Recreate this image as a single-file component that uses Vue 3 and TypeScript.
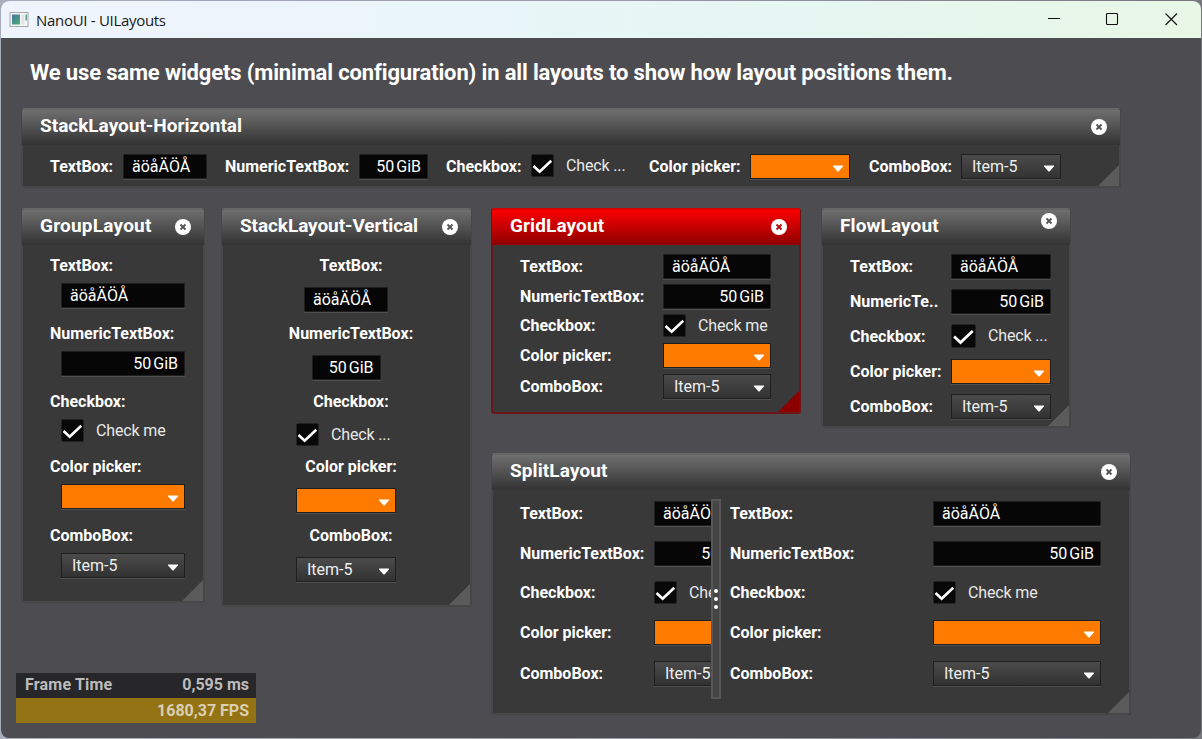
<script setup lang="ts">
type Kind = 'text' | 'number' | 'check' | 'color' | 'combo'

interface Field {
  kind: Kind
  label: string
  value: string
}

interface Win {
  id: string
  title: string
  panes: Field[][]
}

function fields(checkText = 'Check me', numericLabel = 'NumericTextBox:'): Field[] {
  return [
    { kind: 'text', label: 'TextBox:', value: 'äöåÄÖÅ' },
    { kind: 'number', label: numericLabel, value: '50 GiB' },
    { kind: 'check', label: 'Checkbox:', value: checkText },
    { kind: 'color', label: 'Color picker:', value: '' },
    { kind: 'combo', label: 'ComboBox:', value: 'Item-5' },
  ]
}

const windows: Win[] = [
  { id: 'horizontal', title: 'StackLayout-Horizontal', panes: [fields('Check ...')] },
  { id: 'group', title: 'GroupLayout', panes: [fields()] },
  { id: 'vertical', title: 'StackLayout-Vertical', panes: [fields('Check ...')] },
  { id: 'grid', title: 'GridLayout', panes: [fields()] },
  { id: 'flow', title: 'FlowLayout', panes: [fields('Check ...', 'NumericTe..')] },
  { id: 'split', title: 'SplitLayout', panes: [fields(), fields()] },
]
</script>

<template>
  <div class="desktop">
    <div class="app">
      <header class="titlebar">
        <svg class="app-icon" width="20" height="16" viewBox="0 0 20 16">
          <defs>
            <linearGradient id="appIcon" x1="0" y1="0" x2="1" y2="1">
              <stop offset="0" stop-color="#4474a8" />
              <stop offset="1" stop-color="#4fae6c" />
            </linearGradient>
          </defs>
          <rect x="1" y=".5" width="18" height="14" fill="#f3f5f6" stroke="#a5a9ac" />
          <rect x="3" y="2.500" width="8" height="10" fill="url(#appIcon)" />
          <rect x="12.500" y="3" width="3" height="9.500" fill="#e2e4e5" />
          <rect x="16.500" y="2.500" width="1.500" height="6" fill="#5f9f95" />
        </svg>
        <span class="app-name">NanoUI - UILayouts</span>
        <svg class="sys" width="130" height="14" viewBox="0 0 130 14" fill="none" stroke="#111" stroke-width="1.100">
          <path d="M0 5.500H12" />
          <rect x="58.500" y=".5" width="11" height="11" rx="1" />
          <path d="M117.500 .5L129 12M129 .5L117.500 12" />
        </svg>
      </header>

      <main class="canvas">
        <h1 class="headline">We use same widgets (minimal configuration) in all layouts to show how layout positions them.</h1>

        <section v-for="w in windows" :key="w.id" class="win" :class="w.id">
          <div class="win-head">
            <span class="win-title">{{ w.title }}</span>
            <svg class="close" width="16" height="16" viewBox="0 0 16 16">
              <circle cx="8" cy="8" r="8" fill="#fff" />
              <path class="cross" d="M5.500 5.500L10.500 10.500M10.500 5.500L5.500 10.500" stroke-width="1.900" />
            </svg>
          </div>
          <div class="win-body">
            <template v-for="(pane, p) in w.panes" :key="p">
              <div v-if="p > 0" class="splitter"><i /><i /><i /></div>
              <div class="pane">
                <template v-for="f in pane" :key="f.kind">
                  <span class="label" :class="'for-' + f.kind">{{ f.label }}</span>
                  <div v-if="f.kind === 'check'" class="check">
                    <span class="tick">
                      <svg viewBox="0 0 22 22" fill="none" stroke="#fff" stroke-width="2.700">
                        <path d="M1.600 11.500L8 17.600L20.200 6" />
                      </svg>
                    </span>
                    <span class="check-text">{{ f.value }}</span>
                  </div>
                  <div v-else class="box" :class="f.kind">
                    <span class="value">{{ f.value }}</span>
                    <svg v-if="f.kind === 'color' || f.kind === 'combo'" class="arrow" width="12" height="7" viewBox="0 0 12 7">
                      <path d="M1.300 .5H10.700Q11.500 .700 10.900 1.500L6.700 6.200Q6 6.800 5.300 6.200L1.100 1.500Q.5 .700 1.300 .5Z" fill="#fff" />
                    </svg>
                  </div>
                </template>
              </div>
            </template>
          </div>
          <span class="grip" />
        </section>

        <aside class="perf">
          <div class="perf-row"><span>Frame Time</span><span>0,595 ms</span></div>
          <div class="perf-row fps"><span>1680,37 FPS</span></div>
        </aside>
      </main>
    </div>
  </div>
</template>

<style>
html,
body {
  margin: 0;
  overflow: hidden;
}
</style>

<style scoped>
.desktop {
  box-sizing: border-box;
  width: 1202px;
  height: 739px;
  padding: 1px;
  background: linear-gradient(to right, #a9aebf, #9a9aac 50%, #77777e);
  font-family: Roboto, "Liberation Sans", sans-serif;
  color: #fff;
}
.app {
  height: 737px;
  border-radius: 8px;
  overflow: hidden;
  background: #4d4c50;
  display: flex;
  flex-direction: column;
}
.titlebar {
  height: 37px;
  flex: none;
  display: flex;
  align-items: center;
  padding: 0 23px 0 8px;
  background: linear-gradient(to right, #eff4fc, #eaf5fa 33%, #e6f6f2 66%, #e9f7e6);
  color: #1a1a1a;
}
.app-name {
  font: 15px "Open Sans", "Noto Sans", sans-serif;
  letter-spacing: -0.3px;
  margin-left: 7px;
  flex: 1;
}
.canvas {
  position: relative;
  flex: 1;
}
.headline {
  margin: 0;
  padding: 20px 0 0 29px;
  font-size: 22px;
  line-height: 30px;
  font-weight: 700;
  letter-spacing: -0.15px;
  white-space: nowrap;
}

/* floating windows on the canvas */
.win {
  position: absolute;
  box-sizing: border-box;
  border: 2px solid #474748;
  border-top-color: #666;
  border-radius: 3px;
  background: #393939;
  display: flex;
  flex-direction: column;
}
.horizontal { left: 20px; top: 70px; width: 1100px; height: 80px; }
.group { left: 20px; top: 170px; width: 184px; height: 395px; }
.vertical { left: 220px; top: 170px; width: 251px; height: 399px; }
.grid { left: 490px; top: 170px; width: 310px; height: 206px; }
.flow { left: 820px; top: 170px; width: 250px; height: 220px; }
.split { left: 490px; top: 415px; width: 640px; height: 262px; }

.win-head {
  height: 35px;
  flex: none;
  display: flex;
  justify-content: space-between;
  margin: 0 -1px;
  padding: 0 13px 0 18px;
  background: linear-gradient(#6f6f6f, #333);
}
.win-title {
  font-size: 19px;
  line-height: 31px;
  font-weight: 700;
  white-space: nowrap;
}
.group .win-title { letter-spacing: 0.22px; }
.vertical .win-title { letter-spacing: -0.08px; }
.grid .win-title, .split .win-title, .flow .win-title { letter-spacing: 0.1px; }
.close { margin-top: 9px; }
.cross { stroke: #555; }
.flow .close { margin-top: 3px; }
.grid.win { border-color: #6c1619; border-top-color: #d80000; }
.grid .win-head { background: linear-gradient(#fa0000, #8e0000); }
.grid .cross { stroke: #b01010; }
.grip {
  position: absolute;
  right: 0;
  bottom: 0;
  width: 21px;
  height: 21px;
  background: #5b5b5b;
  clip-path: polygon(100% 0, 100% 100%, 0 100%);
}
.grid .grip { background: #8c0000; }

.win-body { flex: 1; min-height: 0; }
.pane { display: grid; align-items: start; }

/* pane arrangements */
.horizontal .pane {
  padding: 9px 0 0 27px;
  grid-template-columns: 73px 102px 134px 87px 85px 118px 101px 119px 92px 100px;
}
.horizontal .text { width: 84px; }
.horizontal .number { width: 69px; }
.horizontal .color { width: 100px; }
.horizontal .check-text { line-height: 24px; }
.group .pane {
  padding: 9px 18px 0 38px;
  grid-template-rows: 29px 39px 29px 39px 29px 36px 29px 40px 29px 25px;
}
.group .label { margin-left: -11px; margin-top: -1px; }
.vertical .pane {
  padding: 9px 1px 0 0;
  justify-items: center;
  grid-template-rows: 33px 35px 33px 35px 33px 32px 33px 36px 33px 25px;
}
.vertical .label { margin-left: 10px; margin-top: -1px; }
.vertical .box, .vertical .check { width: 100px; }
.vertical .text { width: 84px; }
.vertical .number { width: 69px; }
.grid .pane {
  padding: 9px 28px 0 27px;
  grid-template-columns: 143px 1fr;
  grid-template-rows: 30px 30px 29px 31px 25px;
}
.flow .pane {
  padding: 9px 18px 0 27px;
  grid-template-columns: 101px 1fr;
  grid-auto-rows: 35px;
}
.split .win-body { display: flex; }
.split .pane {
  padding-top: 11px;
  padding-left: 9px;
  grid-template-rows: 40px 40px 39px 41px 25px;
  flex: 1;
  grid-template-columns: 203px 168px;
}
.split .pane:first-child {
  flex: none;
  box-sizing: border-box;
  width: 218px;
  padding-left: 27px;
  grid-template-columns: 134px 99px;
  overflow: hidden;
}
.grid .for-check, .split .for-check { margin-top: -1px; }
.splitter {
  box-sizing: border-box;
  width: 10px;
  height: 200px;
  margin-top: 9px;
  border: 2px solid #575757;
  background: #454545;
  display: flex;
  flex-direction: column;
  align-items: center;
  justify-content: center;
  gap: 4px;
}
.splitter i {
  width: 4px;
  height: 4px;
  border-radius: 50%;
  background: #fff;
}

/* widgets */
.label {
  font-size: 16px;
  line-height: 25px;
  font-weight: 700;
  white-space: nowrap;
}
.box {
  box-sizing: border-box;
  height: 25px;
  border: 1px solid #1f1f1f;
  box-shadow: 0 1px 0 #505050;
  display: flex;
  justify-content: space-between;
  align-items: center;
  font-size: 16px;
  line-height: 23px;
  white-space: nowrap;
}
.text, .number { background: #060606; border-radius: 1px; }
.text { padding-left: 8px; }
.number { justify-content: flex-end; padding-right: 6px; word-spacing: -2px; }
.color { background: #ff7b00; padding-right: 5px; }
.combo {
  background: linear-gradient(#4b4b4b, #323232);
  padding: 0 5px 0 10px;
  color: #eee;
}
.arrow { margin-top: 3px; }
.check { display: flex; white-space: nowrap; }
.tick {
  box-sizing: border-box;
  width: 23px;
  height: 23px;
  flex: none;
  border: 1px solid #222;
  border-radius: 2px;
  background: #080808;
  display: flex;
}
.flow .tick { width: 25px; height: 24px; }
.tick svg { flex: 1; }
.check-text {
  margin-left: 12px;
  font-size: 16px;
  line-height: 23px;
  letter-spacing: -0.15px;
  color: #e8e8e8;
}

.perf {
  position: absolute;
  left: 15px;
  top: 635px;
  width: 240px;
  font-size: 16px;
  font-weight: 700;
  color: #bcbcbc;
}
.perf-row {
  height: 25px;
  line-height: 24px;
  padding: 0 7px 0 9px;
  display: flex;
  justify-content: space-between;
  background: #272729;
}
.perf-row span:first-child:not(:last-child) { letter-spacing: 0.2px; }
.fps {
  justify-content: flex-end;
  line-height: 26px;
  background: #937313;
  color: #d9d0b5;
}
</style>
